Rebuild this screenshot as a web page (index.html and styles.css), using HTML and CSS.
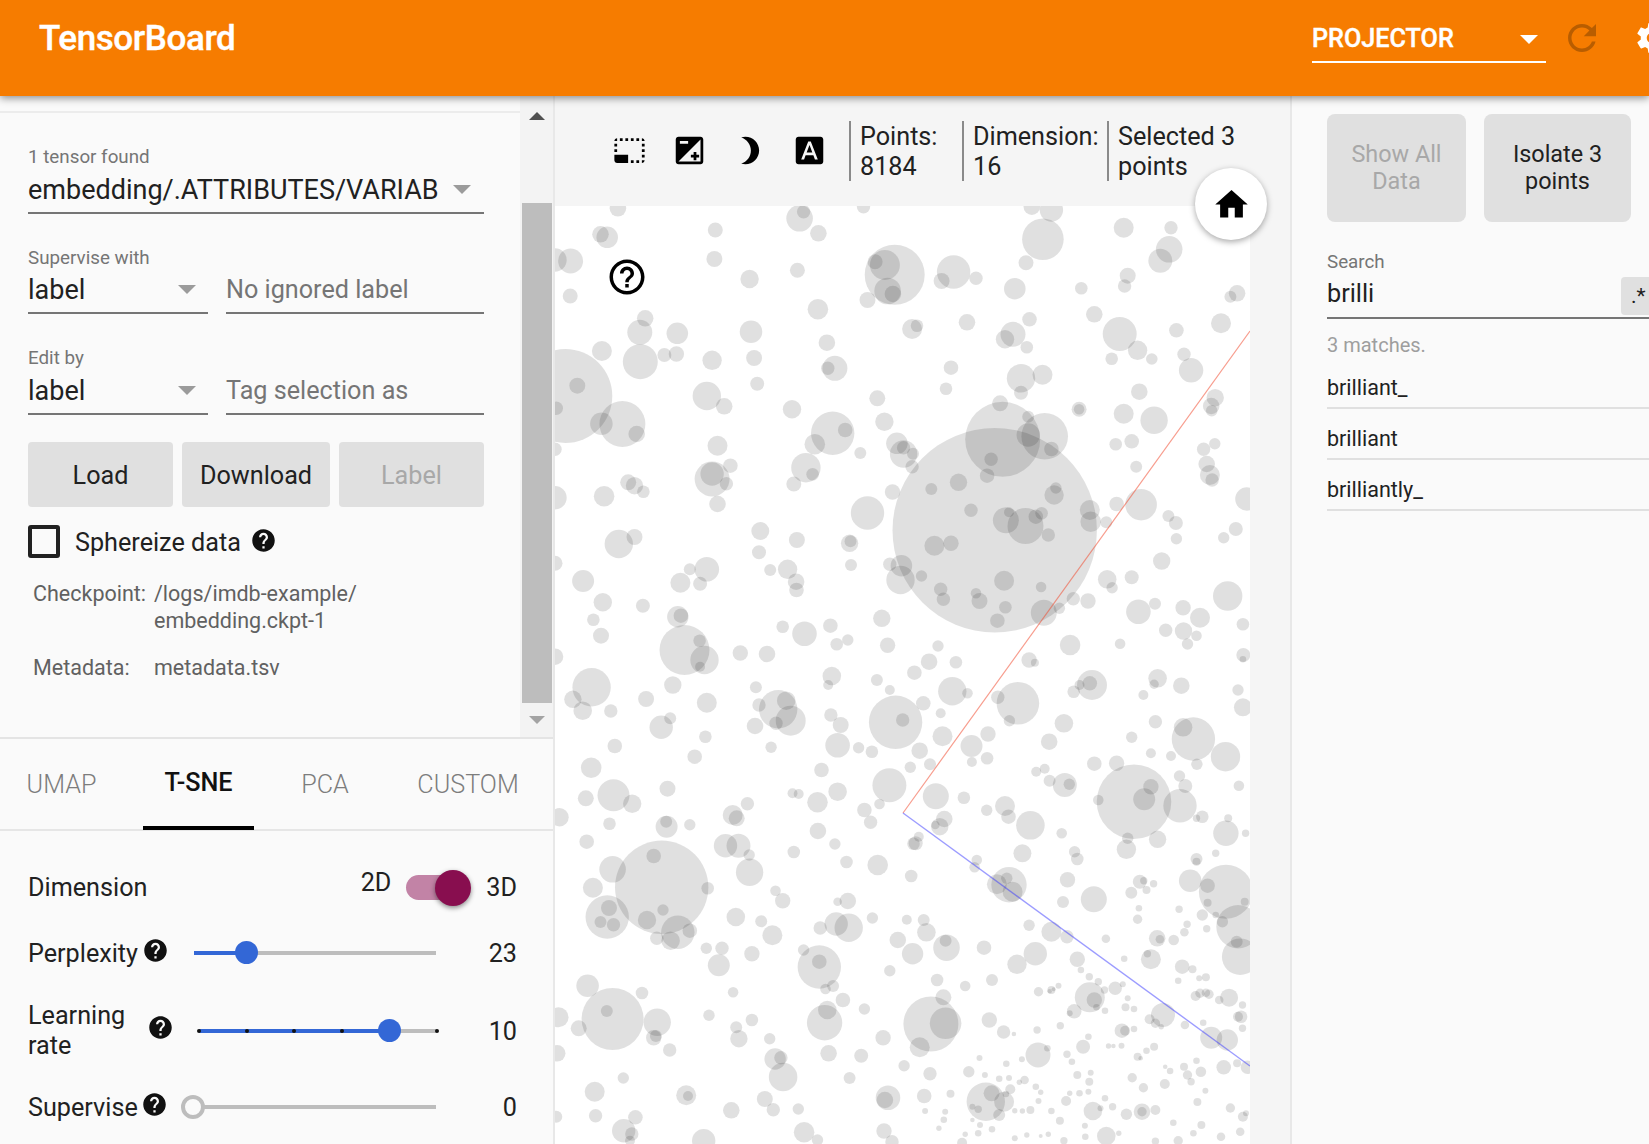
FILE: index.html
```html
<!DOCTYPE html>
<html lang="en">
<head>
    <meta charset="UTF-8">
    <title>TensorBoard</title>
    <link rel="stylesheet" href="styles.css">
</head>
<body>
    <svg class="icon-defs" width="0" height="0">
        <symbol id="i-help" viewBox="0 0 24 24"><path d="M12 2C6.48 2 2 6.48 2 12s4.48 10 10 10 10-4.48 10-10S17.52 2 12 2zm1 17h-2v-2h2v2zm2.07-7.75l-.9.92C13.45 12.9 13 13.5 13 15h-2v-.5c0-1.1.45-2.1 1.17-2.83l1.24-1.26c.37-.36.59-.86.59-1.41 0-1.1-.9-2-2-2s-2 .9-2 2H8c0-2.21 1.79-4 4-4s4 1.79 4 4c0 .88-.36 1.68-.93 2.25z"/></symbol>
    </svg>

    <header class="topbar">
        <div class="brand">TensorBoard</div>
        <div class="plugin-select">
            <span>PROJECTOR</span>
            <i class="caret caret-white"></i>
        </div>
        <svg class="top-icon refresh" viewBox="0 0 24 24"><path d="M17.65 6.35C16.2 4.9 14.21 4 12 4c-4.42 0-7.99 3.58-7.99 8s3.57 8 7.99 8c3.73 0 6.84-2.55 7.73-6h-2.08c-.82 2.33-3.04 4-5.65 4-3.31 0-6-2.69-6-6s2.69-6 6-6c1.66 0 3.14.69 4.22 1.78L13 11h7V4l-2.35 2.35z"/></svg>
        <svg class="top-icon gear" viewBox="0 0 24 24"><path d="M19.43 12.98c.04-.32.07-.64.07-.98s-.03-.66-.07-.98l2.11-1.65c.19-.15.24-.42.12-.64l-2-3.46c-.12-.22-.39-.3-.61-.22l-2.49 1c-.52-.4-1.08-.73-1.69-.98l-.38-2.65C14.46 2.18 14.25 2 14 2h-4c-.25 0-.46.18-.49.42l-.38 2.65c-.61.25-1.17.59-1.69.98l-2.49-1c-.23-.09-.49 0-.61.22l-2 3.46c-.13.22-.07.49.12.64l2.11 1.65c-.04.32-.07.65-.07.98s.03.66.07.98l-2.11 1.65c-.19.15-.24.42-.12.64l2 3.46c.12.22.39.3.61.22l2.49-1c.52.4 1.08.73 1.69.98l.38 2.65c.03.24.24.42.49.42h4c.25 0 .46-.18.49-.42l.38-2.65c.61-.25 1.17-.59 1.69-.98l2.49 1c.23.09.49 0 .61-.22l2-3.46c.12-.22.07-.49-.12-.64l-2.11-1.65zM12 15.5c-1.93 0-3.5-1.57-3.5-3.5s1.57-3.5 3.5-3.5 3.5 1.57 3.5 3.5-1.57 3.5-3.5 3.5z"/></svg>
    </header>

    <main class="layout">
        <aside class="left-panel">
            <section class="data-section">
                <div class="data-form">
                    <div class="field">
                        <label class="field-label">1 tensor found</label>
                        <div class="field-value">embedding/.ATTRIBUTES/VARIAB<i class="caret caret-tensor"></i></div>
                    </div>
                    <div class="field-pair">
                        <div class="field field-select">
                            <label class="field-label">Supervise with</label>
                            <div class="field-value">label<i class="caret"></i></div>
                        </div>
                        <div class="field field-text">
                            <div class="field-value placeholder">No ignored label</div>
                        </div>
                    </div>
                    <div class="field-pair field-pair-last">
                        <div class="field field-select">
                            <label class="field-label">Edit by</label>
                            <div class="field-value">label<i class="caret"></i></div>
                        </div>
                        <div class="field field-text">
                            <div class="field-value placeholder">Tag selection as</div>
                        </div>
                    </div>
                    <div class="data-buttons">
                        <button class="btn btn-load">Load</button>
                        <button class="btn btn-download">Download</button>
                        <button class="btn btn-label disabled">Label</button>
                    </div>
                    <div class="sphereize">
                        <span class="checkbox"></span>
                        <span>Sphereize data</span>
                        <svg class="help"><use href="#i-help"/></svg>
                    </div>
                    <dl class="info">
                        <dt>Checkpoint:</dt>
                        <dd>/logs/imdb-example/<br>embedding.ckpt-1</dd>
                        <dt>Metadata:</dt>
                        <dd>metadata.tsv</dd>
                    </dl>
                </div>
                <div class="scrollbar">
                    <i class="scroll-up"></i>
                    <div class="scroll-thumb"></div>
                    <i class="scroll-down"></i>
                </div>
            </section>

            <nav class="tabs">
                <div class="tab">UMAP</div>
                <div class="tab active">T-SNE</div>
                <div class="tab">PCA</div>
                <div class="tab">CUSTOM</div>
            </nav>

            <section class="params">
                <div class="param param-dim">
                    <span class="param-name">Dimension</span>
                    <span class="dim-2d">2D</span>
                    <span class="toggle"><i class="toggle-knob"></i></span>
                    <span class="dim-3d">3D</span>
                </div>
                <div class="param param-perplexity">
                    <span class="param-name">Perplexity</span>
                    <svg class="help"><use href="#i-help"/></svg>
                    <div class="slider"><div class="slider-fill" style="width:21.5%"></div></div>
                    <span class="param-value">23</span>
                </div>
                <div class="param param-rate">
                    <span class="param-name">Learning<br>rate</span>
                    <svg class="help"><use href="#i-help"/></svg>
                    <div class="slider">
                        <div class="slider-fill" style="width:79.8%"></div>
                        <i class="tick" style="left:0"></i>
                        <i class="tick" style="left:20%"></i>
                        <i class="tick" style="left:40%"></i>
                        <i class="tick" style="left:60%"></i>
                        <i class="tick" style="left:100%"></i>
                    </div>
                    <span class="param-value">10</span>
                </div>
                <div class="param param-supervise">
                    <span class="param-name">Supervise</span>
                    <svg class="help"><use href="#i-help"/></svg>
                    <div class="slider"><i class="knob-empty"></i></div>
                    <span class="param-value">0</span>
                </div>
            </section>
        </aside>

        <section class="center">
            <div class="toolbar">
                <div class="tool-icons">
                    <svg class="tool" viewBox="0 0 24 24"><path d="M23 15h-2v2h2v-2zm0-4h-2v2h2v-2zm0 8h-2v2c1 0 2-1 2-2zM15 3h-2v2h2V3zm8 4h-2v2h2V7zm-2-4v2h2c0-1-1-2-2-2zM3 21h8v-6H1v4c0 1.1.9 2 2 2zM3 7H1v2h2V7zm12 12h-2v2h2v-2zm4-16h-2v2h2V3zm0 16h-2v2h2v-2zM3 3C2 3 1 4 1 5h2V3zm0 8H1v2h2v-2zm8-8H9v2h2V3zM7 3H5v2h2V3z"/></svg>
                    <svg class="tool" viewBox="0 0 24 24"><path d="M15 17v2h2v-2h2v-2h-2v-2h-2v2h-2v2h2zm5-15H4c-1.1 0-2 .9-2 2v16c0 1.1.9 2 2 2h16c1.1 0 2-.9 2-2V4c0-1.1-.9-2-2-2zM5 5h6v2H5V5zm15 15H4L20 4v16z"/></svg>
                    <svg class="tool" viewBox="0 0 24 24"><path d="M9 2c-1.05 0-2.05.16-3 .46 4.06 1.27 7 5.06 7 9.54 0 4.48-2.94 8.27-7 9.54.95.3 1.95.46 3 .46 5.52 0 10-4.48 10-10S14.52 2 9 2z"/></svg>
                    <svg class="tool" viewBox="0 0 24 24"><path d="M9.93 13.5h4.14L12 7.98zM20 2H4c-1.1 0-2 .9-2 2v16c0 1.1.9 2 2 2h16c1.1 0 2-.9 2-2V4c0-1.1-.9-2-2-2zm-4.05 16.5l-1.14-3H9.17l-1.12 3H5.96l5.11-13h1.86l5.11 13h-2.09z"/></svg>
                </div>
                <div class="stat stat-points">Points:<br>8184</div>
                <div class="stat stat-dim">Dimension:<br>16</div>
                <div class="stat stat-selected">Selected 3<br>points</div>
            </div>
            <div class="canvas-wrap">
                <svg id="scatter" class="scatter" width="695" height="938">
                    <g id="points" fill="#000" fill-opacity="0.12"></g>
                    <line x1="348" y1="607" x2="695" y2="125" stroke="#f04a30" stroke-opacity="0.55" stroke-width="1.2"/>
                    <line x1="348" y1="607" x2="695" y2="860" stroke="#3a3aff" stroke-opacity="0.5" stroke-width="1.4"/>
                </svg>
                <svg class="canvas-help" viewBox="0 0 24 24"><path d="M11 18h2v-2h-2v2zm1-16C6.48 2 2 6.48 2 12s4.48 10 10 10 10-4.48 10-10S17.52 2 12 2zm0 18c-4.41 0-8-3.59-8-8s3.59-8 8-8 8 3.59 8 8-3.59 8-8 8zm0-14c-2.21 0-4 1.79-4 4h2c0-1.1.9-2 2-2s2 .9 2 2c0 2-3 1.75-3 5h2c0-2.25 3-2.5 3-5 0-2.21-1.79-4-4-4z"/></svg>
                <div class="fab">
                    <svg viewBox="0 0 24 24"><path d="M10 20v-6h4v6h5v-8h3L12 3 2 12h3v8z"/></svg>
                </div>
            </div>
        </section>

        <aside class="right-panel">
            <div class="right-buttons">
                <button class="btn btn-show disabled">Show All<br>Data</button>
                <button class="btn btn-isolate">Isolate 3<br>points</button>
            </div>
            <label class="field-label search-label">Search</label>
            <div class="search-box">
                brilli
                <span class="regex">.*</span>
            </div>
            <div class="match-count">3 matches.</div>
            <div class="match">brilliant_</div>
            <div class="match">brilliant</div>
            <div class="match">brilliantly_</div>
        </aside>
    </main>
    <script src="plot.js"></script>
</body>
</html>
```

FILE: styles.css
```css
html, body {
    margin: 0;
    height: 1144px;
    overflow: hidden;
}
body {
    font-family: Roboto, "Liberation Sans", sans-serif;
    font-size: 25.2px;
    color: #212121;
    background: #fafafa;
}
.icon-defs {
    position: absolute;
}
.topbar {
    position: relative;
    z-index: 2;
    display: flex;
    align-items: flex-start;
    height: 96px;
    background: #f67c00;
    box-shadow: 0 2px 8px rgba(0, 0, 0, 0.45);
    color: white;
}
.brand {
    flex: 1;
    margin: 19px 0 0 39px;
    font-size: 35px;
    font-weight: 500;
    line-height: 40px;
    letter-spacing: -0.4px;
    -webkit-text-stroke: 0.4px white;
}
.plugin-select {
    position: relative;
    width: 234px;
    height: 37px;
    margin-top: 24px;
    border-bottom: 2px solid white;
    font-size: 25.2px;
    font-weight: 500;
    line-height: 29px;
    -webkit-text-stroke: 0.4px white;
}
.caret {
    position: absolute;
    right: 0;
    bottom: 18px;
    width: 0;
    height: 0;
    border-left: 9px solid transparent;
    border-right: 9px solid transparent;
    border-top: 9px solid #9b9b9b;
}
.caret-white {
    right: 8px;
    bottom: 17px;
    border-top-color: white;
}
.top-icon {
    flex: none;
    width: 36px;
    height: 36px;
    margin-top: 20px;
}
.refresh {
    width: 42px;
    height: 42px;
    margin-top: 17px;
    margin-left: 15px;
    fill: rgba(0, 0, 0, 0.25);
}
.gear {
    margin-left: 31px;
    margin-right: -21px;
    fill: white;
}

.layout {
    display: flex;
    height: 1048px;
}
.left-panel {
    flex: none;
    width: 555px;
    box-sizing: border-box;
    border-right: 2px solid #e8e8e8;
    background: #fafafa;
}
.data-section {
    display: flex;
    height: 643px;
    box-sizing: border-box;
    border-bottom: 2px solid #e4e4e4;
}
.data-form {
    flex: 1;
    margin-top: 15px;
    padding: 33px 36px 0 28px;
    border-top: 2px solid #ececec;
}
.field-label {
    display: block;
    font-size: 18.8px;
    line-height: 22px;
    color: #757575;
}
.field-value {
    position: relative;
    height: 32px;
    margin-top: 4px;
    padding-bottom: 8px;
    border-bottom: 2px solid #757575;
    font-size: 27px;
    line-height: 37px;
    white-space: nowrap;
}
.caret-tensor {
    right: 13px;
}
.field-value .caret {
    bottom: 18px;
}
.field-value .caret:not(.caret-tensor) {
    right: 12px;
}
.field-pair {
    display: flex;
    align-items: flex-end;
    gap: 18px;
    margin-top: 33px;
}
.field-pair .field-value {
    margin-top: 3px;
}
.field-pair-last {
    margin-top: 33px;
}
.field-pair-last .field-value {
    margin-top: 4px;
}
.field-select {
    width: 180px;
}
.field-text {
    flex: 1;
}
.field-value.placeholder {
    font-size: 25.2px;
    line-height: 35px;
    color: #757575;
}
.btn {
    display: block;
    border: none;
    padding: 0;
    background: #e0e0e0;
    color: #212121;
    font-family: inherit;
    font-size: 25.2px;
    line-height: 27px;
}
.btn.disabled {
    color: #a8a8a8;
}
.data-buttons {
    display: flex;
    gap: 9px;
    margin-top: 27px;
}
.data-buttons .btn {
    height: 65px;
    padding-top: 2px;
    border-radius: 4px;
}
.btn-load {
    width: 145px;
}
.btn-download {
    width: 148px;
}
.btn-label {
    width: 145px;
}
.sphereize {
    display: flex;
    align-items: center;
    height: 33px;
    margin-top: 19px;
}
.checkbox {
    width: 24px;
    height: 25px;
    margin: -2px 15px 0 0;
    border: 4px solid #212121;
    border-radius: 3px;
}
.help {
    flex: none;
    width: 27px;
    height: 27px;
    fill: #111;
}
.sphereize .help {
    margin: -4px 0 0 9px;
}
.info {
    display: grid;
    grid-template-columns: 121px 1fr;
    row-gap: 21px;
    margin: 22px 0 0 5px;
    font-size: 21.5px;
    line-height: 26.5px;
    color: #616161;
}
.info dd {
    margin: 0;
}
.scrollbar {
    flex: none;
    width: 33px;
    background: #f3f3f3;
    padding-top: 16px;
    box-sizing: border-box;
}
.scrollbar i {
    display: block;
    width: 0;
    height: 0;
    margin: 0 auto;
    border-left: 8px solid transparent;
    border-right: 8px solid transparent;
}
.scroll-up {
    border-bottom: 8px solid #505050;
}
.scroll-thumb {
    width: 30px;
    height: 500px;
    margin: 83px 0 0 2px;
    background: #bdbdbd;
}
.scrollbar .scroll-down {
    margin-top: 13px;
    border-top: 8px solid #a3a3a3;
}

.tabs {
    display: grid;
    grid-template-columns: 123px 111px 102px 144px;
    gap: 20px;
    height: 92px;
    box-sizing: border-box;
    border-bottom: 2px solid #e6e6e6;
}
.tab {
    box-sizing: border-box;
    height: 91px;
    padding-top: 32px;
    font-size: 25.2px;
    line-height: 28px;
    font-weight: 300;
    color: #7d7d7d;
    text-align: center;
}
.tab.active {
    padding-top: 30px;
    border-bottom: 4px solid black;
    font-weight: 500;
    color: #111;
}

.params {
    padding: 38px 36px 0 28px;
}
.param {
    display: flex;
    align-items: center;
    min-height: 36px;
    margin-bottom: 30px;
    line-height: 30px;
}
.param-name {
    flex: none;
    padding-top: 2px;
}
.param-value {
    flex: 1;
    padding-top: 2px;
    text-align: right;
}
.dim-2d {
    margin: -8px 0 0 auto;
}
.toggle {
    position: relative;
    width: 56px;
    height: 25px;
    margin-left: 15px;
    border-radius: 13px;
    background: #c283a6;
}
.toggle-knob {
    position: absolute;
    top: -5px;
    right: -9px;
    width: 36px;
    height: 36px;
    border-radius: 50%;
    background: #880e4f;
    box-shadow: 0 2px 5px rgba(0, 0, 0, 0.45);
}
.dim-3d {
    margin-left: 24px;
    padding-top: 2px;
}
.param .help {
    margin-bottom: 5px;
}
.slider {
    position: relative;
    height: 4px;
    background: #bdbdbd;
}
.slider-fill {
    position: relative;
    height: 100%;
    background: #3367d6;
}
.slider-fill::after {
    content: "";
    position: absolute;
    top: -10px;
    right: -12px;
    width: 23px;
    height: 23px;
    border-radius: 50%;
    background: #3367d6;
}
.param-perplexity .param-name {
    width: 114px;
}
.param-perplexity .slider {
    width: 242px;
    margin-left: 25px;
}
.param-rate {
    min-height: 60px;
    margin-bottom: 28px;
}
.param-rate .param-name {
    width: 119px;
    padding-top: 0;
}
.param-rate .help {
    margin-bottom: 7px;
}
.param-rate .slider {
    width: 238px;
    margin-left: 25px;
}
.tick {
    position: absolute;
    top: 0;
    width: 4px;
    height: 4px;
    margin-left: -2px;
    border-radius: 50%;
    background: #111;
}
.param-supervise .param-name {
    width: 113px;
}
.param-supervise .slider {
    width: 253px;
    margin-left: 15px;
}
.knob-empty {
    position: absolute;
    top: -10px;
    left: -2px;
    width: 16px;
    height: 16px;
    border: 4px solid #bdbdbd;
    border-radius: 50%;
    background: #fafafa;
}

.center {
    flex: none;
    width: 735px;
    background: #f5f5f5;
}
.toolbar {
    display: flex;
    align-items: center;
    height: 110px;
    box-sizing: border-box;
    padding-left: 58px;
}
.tool-icons {
    display: flex;
    gap: 27px;
    width: 236px;
    margin-top: -2px;
}
.tool {
    flex: none;
    width: 33px;
    height: 33px;
}
.stat {
    height: 60px;
    box-sizing: border-box;
    padding: 1px 0 0 9px;
    border-left: 2px solid #8a8a8a;
    font-size: 25.2px;
    line-height: 30px;
    white-space: nowrap;
}
.stat-points {
    width: 113px;
}
.stat-dim {
    width: 145px;
}
.canvas-wrap {
    position: relative;
}
.scatter {
    display: block;
    background: white;
}
.canvas-help {
    position: absolute;
    top: 50px;
    left: 51px;
    width: 42px;
    height: 42px;
}
.fab {
    position: absolute;
    top: -38px;
    left: 640px;
    display: flex;
    align-items: center;
    justify-content: center;
    width: 72px;
    height: 72px;
    border-radius: 50%;
    background: white;
    box-shadow: 0 2px 6px rgba(0, 0, 0, 0.35);
}
.fab svg {
    width: 39px;
    height: 39px;
}

.right-panel {
    flex: 1;
    min-width: 0;
    overflow: hidden;
    padding-left: 35px;
    border-left: 2px solid #e8e8e8;
    background: #fafafa;
}
.right-buttons {
    display: flex;
    gap: 18px;
    margin-top: 18px;
}
.right-buttons .btn {
    height: 108px;
    border-radius: 8px;
    font-size: 23.4px;
}
.btn-show {
    width: 139px;
}
.btn-isolate {
    width: 147px;
}
.search-label {
    margin-top: 29px;
}
.search-box {
    position: relative;
    height: 32px;
    margin-top: 4px;
    padding-bottom: 8px;
    border-bottom: 2px solid #757575;
    line-height: 34px;
}
.regex {
    position: absolute;
    top: 0;
    left: 294px;
    width: 40px;
    height: 38px;
    padding-left: 10px;
    box-sizing: border-box;
    border-radius: 4px;
    background: #e0e0e0;
    font-size: 21px;
    line-height: 38px;
}
.match-count {
    margin-top: 14px;
    font-size: 20px;
    line-height: 25px;
    color: #9e9e9e;
}
.match {
    height: 31px;
    padding-top: 18px;
    border-bottom: 2px solid #e0e0e0;
    font-size: 21.5px;
    line-height: 24px;
}
```

FILE: plot.js
```js
// scatter points, traced as [x, y, size]: x scaled by 0.4464, y and size by 1/3
const upper = [
    [141,25,50],[548,55,80],[557,35,40],[691,20,40],[1068,20,50],[1112,30,70],[1093,118,125],[590,100,50],
    [117,112,65],[102,103,50],[359,90,45],[35,183,75],[0,180,70],[357,177,48],[543,211,45],[436,237,55],[34,288,45],
    [761,224,180],[739,195,90],[717,185,45],[745,273,80],[757,282,50],[893,216,100],[866,243,48],[943,235,40],
    [1055,188,45],[1030,266,65],[1274,83,60],[1380,83,40],[1376,148,80],[1356,182,72],[1283,227,48],[1276,258,40],
    [1179,265,38],[1528,280,50],[1513,290,36],[700,300,48],[589,328,62],[202,355,50],[190,397,75],[274,400,65],
    [191,485,105],[245,465,42],[272,462,46],[105,453,60],[439,395,68],[352,481,58],[446,474,48],[453,551,42],
    [340,588,85],[379,619,50],[609,428,50],[627,505,75],[611,505,40],[23,588,282],[50,557,48],[3,625,40],
    [151,672,138],[104,671,68],[183,702,50],[531,628,55],[722,595,48],[738,665,55],[622,700,130],[650,690,44],
    [582,733,62],[684,759,36],[766,730,65],[781,762,82],[781,743,40],[802,761,36],[800,800,40],[562,803,88],
    [577,823,38],[535,852,45],[364,737,60],[393,797,44],[352,837,105],[352,822,70],[384,851,40],[364,912,50],
    [0,748,40],[0,893,70],[110,889,62],[164,847,48],[178,857,52],[198,875,38],[800,387,60],[811,377,38],[923,367,50],
    [1063,358,44],[1026,403,75],[1008,418,55],[1057,442,38],[1208,343,50],[1265,402,102],[1305,451,58],[1392,391,44],
    [1492,370,60],[1247,476,38],[1337,477,35],[1409,463,40],[1425,511,73],[887,503,44],[876,566,38],[1044,535,85],
    [1092,524,60],[1044,578,42],[1309,575,50],[1479,593,52],[1470,618,50],[1471,632,35],[1274,641,60],[1342,661,82],
    [1174,628,45],[1174,628,32],[1003,718,225],[1097,709,140],[997,610,48],[1060,650,36],[1060,705,70],[1112,747,44],
    [1256,733,38],[1292,724,44],[1453,748,40],[1478,731,34],[1302,800,36],[1460,792,50],[1467,825,60],[1472,840,40],
    [985,991,613],[977,778,40],[968,827,44],[904,847,52],[843,867,36],[1122,864,34],[1118,885,58],[932,931,40],
    [1010,961,78],[1017,937,30],[1054,978,108],[1077,950,44],[1090,940,38],[1105,1005,40],[1198,930,60],[1200,965,62],
    [1235,967,36],[850,1037,60],[887,1030,46],[1006,1142,60],[1089,1161,32],[864,1168,40],[870,1198,40],[943,1180,32],
    [951,1203,48],[1009,1222,38],[991,1262,44],[1095,1238,78],[1130,1225,34],[1161,1196,40],[1194,1203,46],[756,876,46],
    [700,939,100],[1258,912,44],[1313,914,95],[1374,948,36],[1391,969,42],[1392,1016,34],[1525,987,42],[1498,1013,34],
    [1550,897,70],[460,993,54],[542,1020,48],[660,1030,52],[662,1024,36],[457,1057,42],[663,1095,36],[143,1032,85],
    [178,1011,48],[750,1093,40],[776,1097,65],[774,1140,85],[821,1128,34],[1237,1138,56],[1292,1132,42],[1248,1163,34],
    [1359,1083,52],[340,1108,74],[302,1108,36],[281,1148,60],[325,1151,42],[63,1143,66],[521,1108,58],[482,1110,36],
    [540,1145,50],[541,1170,44],[0,1090,45],[107,1207,55],[197,1217,42],[86,1259,38],[103,1307,48],[275,1250,64],
    [282,1247,44],[290,1350,150],[324,1322,38],[335,1380,85],[325,1400,30],[510,1280,38],[559,1301,74],[617,1277,44],
    [732,1255,52],[631,1333,38],[656,1320,34],[745,1336,46],[858,1338,34],[415,1359,46],[475,1362,50],[1307,1235,74],
    [1344,1211,36],[1407,1223,46],[1445,1253,60],[1368,1291,40],[1408,1293,52],[1437,1307,32],[1417,1332,34],
    [1507,1188,88],[1541,1273,38],[1266,1331,32],[1154,1335,62],[1062,1380,46],[1075,1388,24],[898,1387,38],
    [838,1385,50],[1542,1365,42],[1541,1378,20],[0,1370,50]
];

const lower = [
    [82,52,115],[40,88,52],[62,122,56],[125,123,40],[204,87,48],[264,45,52],[340,98,60],[238,172,70],[258,145,36],
    [337,200,38],[134,228,44],[313,260,44],[81,293,62],[131,376,96],[173,401,55],[69,385,48],[252,356,48],[450,52,36],
    [500,118,115],[518,92,56],[457,105,40],[528,152,90],[495,160,40],[448,168,50],[484,232,34],[620,18,56],[612,45,30],
    [721,30,36],[750,60,30],[805,8,44],[618,135,40],[640,165,48],[633,226,74],[680,233,34],[710,245,38],[597,300,44],
    [763,157,160],[779,150,40],[825,100,44],[890,64,85],[924,70,32],[864,130,30],[868,199,60],[817,242,50],[840,283,36],
    [796,292,34],[933,228,66],[970,192,46],[968,265,38],[934,276,30],[749,346,102],[853,379,78],[916,383,38],[727,402,32],
    [633,365,56],[588,397,62],[532,370,30],[546,372,30],[693,420,44],[707,457,40],[589,483,50],[627,522,34],[535,546,38],
    [653,576,38],[723,585,62],[798,618,38],[10,442,55],[122,461,38],[71,515,44],[250,470,66],[249,455,36],[302,464,34],
    [398,435,60],[431,401,40],[407,445,48],[411,527,72],[382,527,70],[435,555,34],[436,607,82],[494,662,32],[510,692,46],
    [239,652,280],[129,598,80],[85,653,60],[117,741,130],[121,714,48],[102,756,36],[131,764,40],[221,558,44],[342,655,38],
    [206,750,55],[242,720,34],[275,787,100],[228,805,40],[259,812,56],[302,782,44],[405,741,56],[462,754,36],[487,796,60],
    [339,835,34],[374,835,40],[441,851,46],[367,886,66],[557,840,34],[592,891,130],[592,875,44],[606,957,32],[623,948,36],
    [645,990,44],[610,1020,56],[604,1058,106],[693,1017,34],[735,1103,46],[481,1106,34],[633,695,26],[656,693,50],
    [630,762,70],[658,773,85],[594,774,40],[711,744,34],[788,749,30],[826,750,36],[832,787,56],[768,810,50],[801,851,64],
    [875,812,36],[877,833,80],[961,833,44],[750,902,34],[856,930,38],[919,948,32],[979,930,36],[73,947,68],[195,969,38],
    [129,1047,186],[116,1023,36],[229,1057,82],[399,967,32],[345,1036,34],[441,1050,38],[8,1042,60],[53,1075,48],
    [221,1103,46],[226,1098,36],[257,1140,40],[5,1150,50],[406,1072,36],[412,1106,52],[493,1167,64],[506,1163,40],
    [511,1221,86],[613,1150,50],[686,1157,42],[842,1062,165],[875,1060,95],[870,982,48],[817,1132,60],[973,1050,46],
    [1005,1086,40],[1028,1092,14],[1080,1080,22],[1132,1067,22],[153,1224,34],[89,1265,60],[294,1276,60],[298,1278,30],
    [470,1287,48],[489,1319,40],[395,1321,50],[91,1337,40],[180,1342,44],[3,1340,36],[154,1382,70],[172,1392,40],
    [545,1317,34],[558,1387,62],[588,1410,34],[333,1412,70],[737,1383,46],[755,1415,40],[168,1412,30],[660,1224,36],
    [840,1211,40],[782,1187,34],[746,1283,74],[739,1290,50],[827,1278,44],[886,1271,24],[927,1205,34],[951,1164,18],
    [963,1215,18],[995,1226,20],[1017,1224,18],[1011,1181,20],[1046,1168,18],[1052,1230,26],[1040,1237,16],[965,1295,115],
    [978,1270,48],[1006,1295,60],[1010,1272,20],[995,1335,36],[948,1318,22],[935,1310,18],[1020,1258,30],[1077,1250,20],
    [1088,1267,16],[1083,1293,18],[1112,1323,20],[1065,1320,24],[1047,1323,16],[1030,1322,16],[874,1325,18],[871,1349,20],
    [829,1323,18],[935,1350,14],[952,1365,18],[979,1378,20],[919,1393,16],[948,1390,20],[1057,1395,16],[1030,1405,18],
    [1105,1393,16],[1088,1398,12],[860,1375,16],[912,1418,30],[1082,1155,75],[1103,1135,20],[1147,1153,22],[1158,1175,20],
    [1183,1130,42],[1195,1100,20],[1240,1128,16],[1251,1128,14],[1269,1127,18],[1305,1160,24],[1312,1165,14],[1325,1142,20],
    [1342,1130,24],[1293,1223,28],[1318,1253,28],[1366,1242,30],[1367,1190,14],[1378,1203,20],[1409,1190,24],[1417,1215,28],
    [1447,1205,32],[1437,1172,20],[1425,1235,22],[1457,1262,18],[1170,1215,24],[1197,1235,24],[1200,1208,18],[1145,1293,30],
    [1175,1270,20],[1153,1270,16],[1195,1265,18],[1187,1367,18],[1131,1352,24],[1205,1323,56],[1222,1315,18],[1232,1285,20],
    [1249,1310,22],[1280,1333,34],[1315,1325,50],[1315,1325,28],[1345,1320,30],[1385,1358,20],[1439,1296,24],[1448,1365,24],
    [1492,1400,26],[1430,1390,20],[1396,1412,28],[1345,1414,22],[1235,1398,56],[1263,1390,16],[1140,1412,22],[1188,1400,20],
    [1513,1314,28],[1541,1340,30],[1548,1330,18],[1535,1385,26],[1198,982,90],[1208,990,46],[1213,1012,20],[1163,1024,44],
    [1153,1030,18],[1232,1022,20],[1217,935,22],[1197,920,22],[1231,960,22],[1255,955,40],[1272,943,18],[1283,985,18],
    [1278,1012,24],[1297,1017,20],[1083,965,28],[1112,960,24],[1128,947,18],[1108,964,14],[1117,958,12],[1362,1035,72],
    [1332,1048,30],[1345,1060,28],[1358,1070,16],[1270,1082,44],[1277,1082,30],[1297,1077,20],[1411,1065,26],[1452,1058,20],
    [1470,1103,66],[1506,1110,64],[1498,1192,44],[1528,1180,24],[1551,1192,40],[1530,1040,30],[1537,1040,38],[1540,1075,22],
    [1488,990,26],[1510,983,54],[1540,1005,22],[1465,973,28],[1445,970,28],[1458,968,26],[1435,978,30],[1396,932,20],
    [1443,925,18],[1458,922,24],[1428,898,24],[1405,890,44],[1480,550,22],[1437,567,36],[1437,575,24],[1430,207,130],
    [1407,172,56],[1502,260,88],[1438,283,34],[1380,258,30],[1292,202,34],[1335,250,30],[1208,281,44],[1258,280,46],
    [1297,395,224],[1335,350,46],[1320,388,66],[1400,407,100],[1412,348,42],[1399,318,34],[1217,390,32],[1283,505,34],
    [1350,508,52],[1280,538,58],[1532,347,32],[1345,155,40],[1530,60,34],[1541,112,54],[1403,47,50],[1350,25,56],
    [1342,43,28],[1318,75,30],[1203,45,90],[1198,40,44],[1175,45,30],[1162,65,38],[1140,160,56],[1107,215,50],
    [1037,100,128],[992,82,40],[1018,152,34],[1078,305,30],[1097,296,30],[1108,332,36],[1142,345,72],[1152,343,34],
    [1008,408,60],[1016,440,44],[967,421,34],[1065,466,86],[872,447,50],[862,470,52],[852,465,26],[808,520,42],[815,500,30],
    [803,521,38],[945,570,32],[940,592,32],[1135,490,32],[1047,550,54],[1164,545,34],[1170,567,38],[1148,629,46],[1138,696,36],
    [1207,688,78],[1017,644,106],[990,643,60],[1012,625,34],[1025,665,60],[1310,635,42],[1319,632,22],[1341,641,22],
    [1291,668,36],[1325,660,24],[1308,715,20],[1305,748,28],[1398,718,22],[1423,632,68],[1503,490,76],[1450,440,38],
    [1437,445,22],[1508,445,24],[1547,490,22],[1503,665,162],[1462,647,44],[1462,698,24],[1545,695,24],[1480,735,20],
    [1495,755,34],[1530,770,130],[1527,815,36],[1535,860,110],[1450,735,34],[1416,763,22],[1410,787,26],[1460,776,22],
    [1349,805,50],[1355,808,26],[1386,810,32],[1234,806,26],[1112,785,60],[1147,800,40],[1062,766,34],[1076,851,70],
    [1035,883,58],[1170,868,46],[1178,900,20],[1275,866,20],[1335,868,60],[1327,851,22]
];

const group = document.getElementById('points');

function addPoints(list, top) {
    list.forEach(p => {
        const c = document.createElementNS('http://www.w3.org/2000/svg', 'circle');
        c.setAttribute('cx', (p[0] * 0.4464).toFixed(1));
        c.setAttribute('cy', (top + p[1] / 3).toFixed(1));
        c.setAttribute('r', (p[2] / 6).toFixed(1));
        group.appendChild(c);
    });
}

// the svg starts at y=206 of the page
addPoints(upper, 200 - 206);
addPoints(lower, 670 - 206);
```
